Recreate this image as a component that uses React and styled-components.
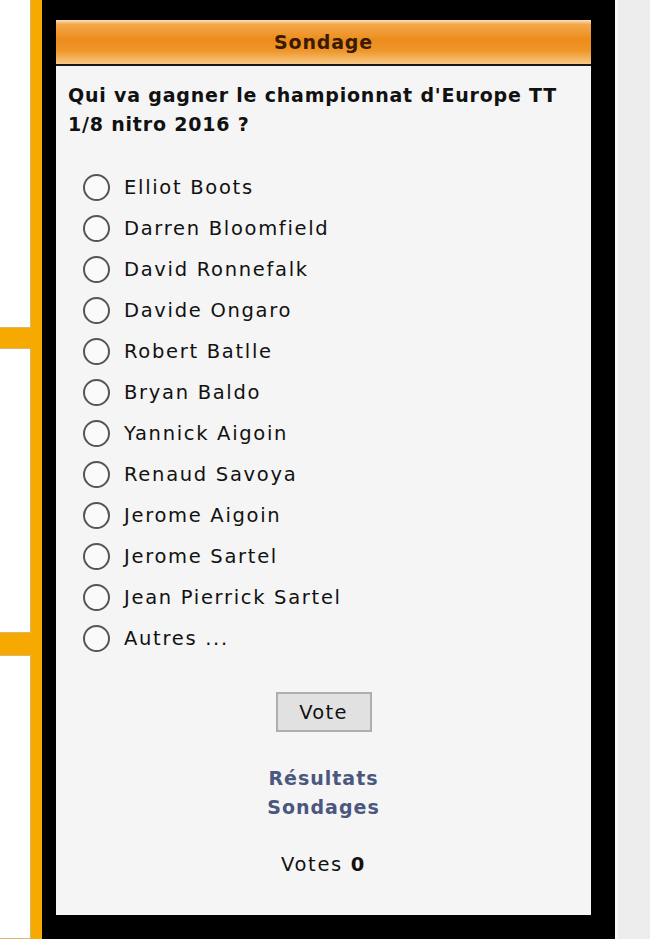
import styled, { createGlobalStyle } from 'styled-components';

const GlobalStyle = createGlobalStyle`
  html, body {
    margin: 0;
    padding: 0;
    background: #efefef;
  }
`;

const Page = styled.div`
  display: flex;
  height: 939px;
  overflow: hidden;
  font-family: 'DejaVu Sans', Verdana, sans-serif;
`;

const LeftRail = styled.div`
  width: 31px;
  border-right: 11px solid #f6a900;
  display: flex;
  flex-direction: column;
  background: #f6a900;
`;

const MenuBox = styled.div`
  height: ${(p) => p.$h}px;
  flex: ${(p) => (p.$h ? 'none' : '1')};
  background: #fff;
  border: 1px solid #d9b66a;
  border-left: none;
  border-top-width: ${(p) => (p.$first ? 0 : 1)}px;
`;

const RailBar = styled.div`
  height: ${(p) => p.$h}px;
`;

const Frame = styled.div`
  background: #000;
  padding: 20px 24px 24px 14px;
  width: 535px;
  flex: none;
`;

const Panel = styled.div`
  height: 100%;
  background: #f5f5f5;
  display: flex;
  flex-direction: column;
`;

const Header = styled.div`
  height: 44px;
  border-bottom: 2px solid #1a1a1a;
  background: linear-gradient(
    to bottom,
    #fbe2bd 0%,
    #f4a84a 10%,
    #ec8c1c 45%,
    #ef9628 70%,
    #f8c986 100%
  );
  display: flex;
  align-items: center;
  justify-content: center;
  font-weight: bold;
  font-size: 19px;
  letter-spacing: 0.8px;
  color: #3a1a05;
`;

const Question = styled.div`
  margin: 15px 0 0 12px;
  font-weight: bold;
  font-size: 19px;
  letter-spacing: 0.8px;
  line-height: 29px;
  color: #111;
`;

const Options = styled.div`
  margin: 35px 0 0 27px;
  display: flex;
  flex-direction: column;
  gap: 15px;
`;

const Option = styled.label`
  display: flex;
  align-items: center;
  gap: 14px;
  height: 26px;
  font-size: 19.5px;
  letter-spacing: 1.7px;
  color: #111;
`;

const Radio = styled.input.attrs({ type: 'radio', name: 'sondage' })`
  appearance: none;
  margin: 0;
  flex: none;
  width: 27px;
  height: 27px;
  border: 2px solid #555;
  border-radius: 50%;
  background: #fafafa;
`;

const VoteButton = styled.button`
  align-self: center;
  box-sizing: border-box;
  margin-top: 41px;
  width: 96px;
  height: 40px;
  padding: 0;
  background: #e1e1e1;
  border: 2px solid #adadad;
  font-family: 'DejaVu Sans', Verdana, sans-serif;
  font-size: 19.5px;
  letter-spacing: 1.3px;
  color: #111;
`;

const Links = styled.div`
  margin-top: 32px;
  display: flex;
  flex-direction: column;
  align-items: center;
  font-weight: bold;
  font-size: 19px;
  letter-spacing: 1px;
  line-height: 29px;

  a {
    color: #4b577f;
    text-decoration: none;
  }
`;

const VoteCount = styled.div`
  margin-top: 31px;
  text-align: center;
  font-size: 19.5px;
  letter-spacing: 1.7px;
  color: #111;

  b {
    font-weight: bold;
  }
`;

const RightStrip = styled.div`
  flex: 1;
  border-left: 3px solid #f8f8f8;
  background: #ededed;
`;

const options = [
  'Elliot Boots',
  'Darren Bloomfield',
  'David Ronnefalk',
  'Davide Ongaro',
  'Robert Batlle',
  'Bryan Baldo',
  'Yannick Aigoin',
  'Renaud Savoya',
  'Jerome Aigoin',
  'Jerome Sartel',
  'Jean Pierrick Sartel',
  'Autres ...',
];

const App = () => {
  return (
    <Page>
      <GlobalStyle />
      <LeftRail>
        <MenuBox $h={327} $first />
        <RailBar $h={20} />
        <MenuBox $h={283} />
        <RailBar $h={22} />
        <MenuBox />
      </LeftRail>

      <Frame>
        <Panel>
          <Header>Sondage</Header>
          <Question>
            Qui va gagner le championnat d'Europe TT
            <br />
            1/8 nitro 2016 ?
          </Question>

          <Options>
            {options.map((name) => (
              <Option key={name}>
                <Radio value={name} />
                {name}
              </Option>
            ))}
          </Options>

          <VoteButton>Vote</VoteButton>

          <Links>
            <a href="#">Résultats</a>
            <a href="#">Sondages</a>
          </Links>

          <VoteCount>
            Votes <b>0</b>
          </VoteCount>
        </Panel>
      </Frame>

      <RightStrip />
    </Page>
  );
};

export default App;
